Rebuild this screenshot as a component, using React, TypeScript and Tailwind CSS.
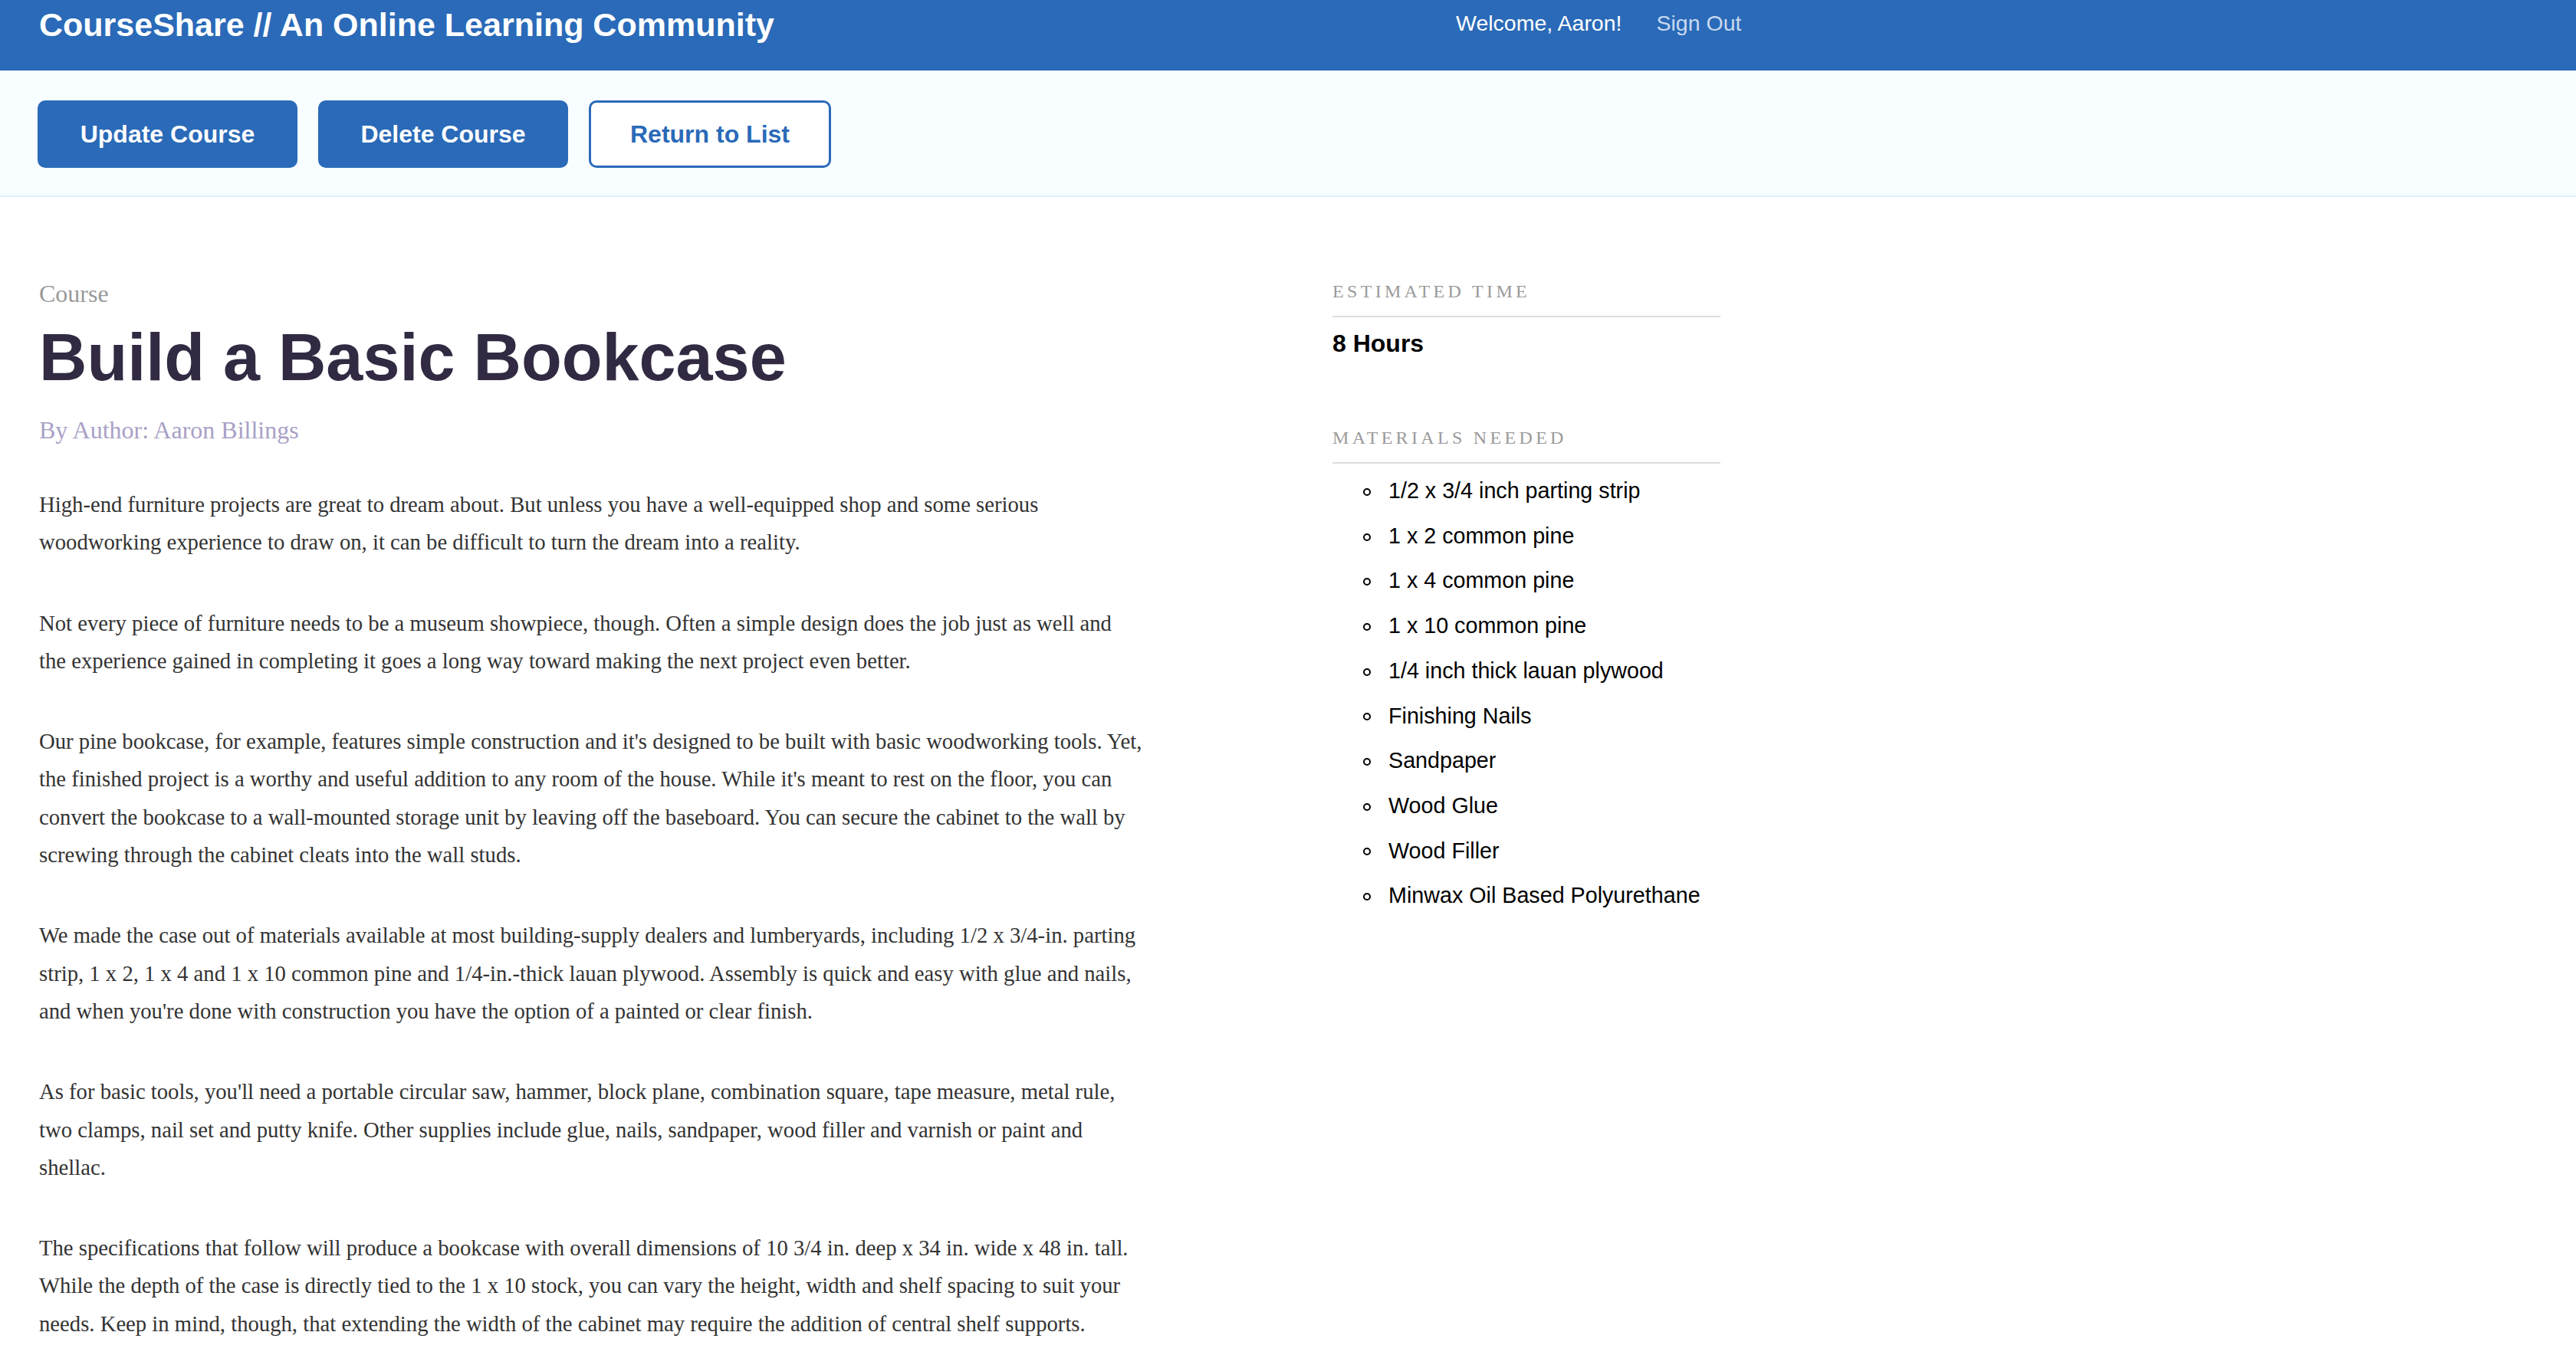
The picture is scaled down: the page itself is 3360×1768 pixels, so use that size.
import { ReactNode } from "react"

// line breaks follow the reference page
const paragraphs = [
  [
    "High-end furniture projects are great to dream about. But unless you have a well-equipped shop and some serious",
    "woodworking experience to draw on, it can be difficult to turn the dream into a reality.",
  ],
  [
    "Not every piece of furniture needs to be a museum showpiece, though. Often a simple design does the job just as well and",
    "the experience gained in completing it goes a long way toward making the next project even better.",
  ],
  [
    "Our pine bookcase, for example, features simple construction and it's designed to be built with basic woodworking tools. Yet,",
    "the finished project is a worthy and useful addition to any room of the house. While it's meant to rest on the floor, you can",
    "convert the bookcase to a wall-mounted storage unit by leaving off the baseboard. You can secure the cabinet to the wall by",
    "screwing through the cabinet cleats into the wall studs.",
  ],
  [
    "We made the case out of materials available at most building-supply dealers and lumberyards, including 1/2 x 3/4-in. parting",
    "strip, 1 x 2, 1 x 4 and 1 x 10 common pine and 1/4-in.-thick lauan plywood. Assembly is quick and easy with glue and nails,",
    "and when you're done with construction you have the option of a painted or clear finish.",
  ],
  [
    "As for basic tools, you'll need a portable circular saw, hammer, block plane, combination square, tape measure, metal rule,",
    "two clamps, nail set and putty knife. Other supplies include glue, nails, sandpaper, wood filler and varnish or paint and",
    "shellac.",
  ],
  [
    "The specifications that follow will produce a bookcase with overall dimensions of 10 3/4 in. deep x 34 in. wide x 48 in. tall.",
    "While the depth of the case is directly tied to the 1 x 10 stock, you can vary the height, width and shelf spacing to suit your",
    "needs. Keep in mind, though, that extending the width of the cabinet may require the addition of central shelf supports.",
  ],
]

const materials = [
  "1/2 x 3/4 inch parting strip",
  "1 x 2 common pine",
  "1 x 4 common pine",
  "1 x 10 common pine",
  "1/4 inch thick lauan plywood",
  "Finishing Nails",
  "Sandpaper",
  "Wood Glue",
  "Wood Filler",
  "Minwax Oil Based Polyurethane",
]

function SideHeading({ children }: { children: ReactNode }) {
  return (
    <h3 className="font-['Liberation_Serif',serif] text-[24px] leading-[28px] uppercase tracking-[0.18em] text-[#9a9a9a] pb-[18px] border-b-2 border-[#dddddd]">
      {children}
    </h3>
  )
}

export default function App() {
  return (
    <div className="min-h-screen bg-white font-['Liberation_Sans',Arial,sans-serif]">
      <header className="h-[92px] bg-[#2a6ab8] flex items-start pl-[51px]">
        <div className="w-[1848px] pt-[7px]">
          <h1 className="text-[43px] leading-[50px] font-bold text-white">
            CourseShare // An Online Learning Community
          </h1>
        </div>
        <nav className="flex items-center gap-[45px] pt-[14px] text-[28.5px] leading-[32px]">
          <span className="text-white">Welcome, Aaron!</span>
          <a className="text-[#c9daf0]">Sign Out</a>
        </nav>
      </header>

      <div className="bg-[#f8feff] border-b-2 border-[#dcf4fa] px-[49px] pt-[39px] pb-[36px] flex gap-[27px]">
        <button className="w-[339px] h-[88px] rounded-[10px] border-[3px] border-[#2a6ab8] bg-[#2a6ab8] text-white text-[32px] font-bold">
          Update Course
        </button>
        <button className="w-[326px] h-[88px] rounded-[10px] border-[3px] border-[#2a6ab8] bg-[#2a6ab8] text-white text-[32px] font-bold">
          Delete Course
        </button>
        <button className="w-[316px] h-[88px] rounded-[10px] border-[3px] border-[#2a6ab8] bg-white text-[#2a6ab8] text-[32px] font-bold">
          Return to List
        </button>
      </div>

      <main className="flex pl-[51px] pt-[108px]">
        <article className="w-[1444px]">
          <div className="font-['Liberation_Serif',serif] text-[32px] leading-[36px] text-[#999999]">Course</div>
          <h2 className="mt-[16px] text-[86.4px] leading-[98px] font-bold text-[#312a42]">Build a Basic Bookcase</h2>
          <div className="mt-[28px] font-['Liberation_Serif',serif] text-[32px] leading-[36px] text-[#a9a0c6]">
            By Author: Aaron Billings
          </div>
          <div className="mt-[55px] font-['Liberation_Serif',serif] text-[28.7px] leading-[49.3px] text-[#333333]">
            {paragraphs.map((lines, i) => (
              <p key={i} className="mb-[56px]">
                {lines.map((l, j) => (
                  <span key={j} className="block whitespace-nowrap">
                    {l}
                  </span>
                ))}
              </p>
            ))}
          </div>
        </article>

        <aside className="ml-[243px] w-[506px] pt-px">
          <SideHeading>Estimated Time</SideHeading>
          <div className="mt-[16px] text-[32px] leading-[37px] font-bold text-black">8 Hours</div>

          <div className="mt-[90px]">
            <SideHeading>Materials Needed</SideHeading>
            <ul className="mt-[6px] pl-[40px]">
              {materials.map((m) => (
                <li key={m} className="flex items-center text-[28.7px] leading-[58.7px] text-black">
                  <span className="w-[10px] h-[10px] rounded-full border-2 border-black mt-[3px] shrink-0" />
                  <span className="ml-[23px]">{m}</span>
                </li>
              ))}
            </ul>
          </div>
        </aside>
      </main>
    </div>
  )
}
